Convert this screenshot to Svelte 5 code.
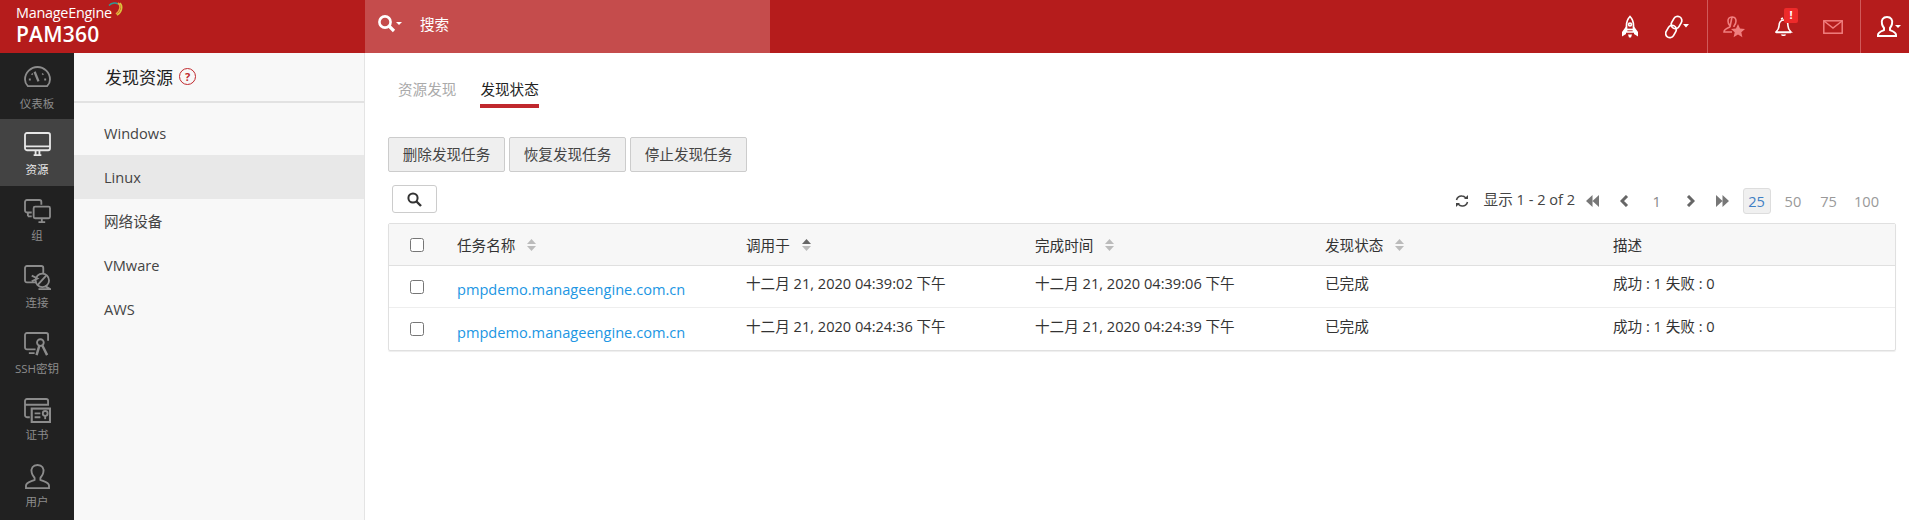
<script>
  const navItems = [
    { key: 'dash', label: '仪表板' },
    { key: 'res', label: '资源', active: true },
    { key: 'group', label: '组' },
    { key: 'conn', label: '连接' },
    { key: 'ssh', label: 'SSH密钥' },
    { key: 'cert', label: '证书' },
    { key: 'user', label: '用户' }
  ];
  const menu = ['Windows', 'Linux', '网络设备', 'VMware', 'AWS'];
  const rows = [
    { start: '十二月 21, 2020 04:39:02 下午', end: '十二月 21, 2020 04:39:06 下午' },
    { start: '十二月 21, 2020 04:24:36 下午', end: '十二月 21, 2020 04:24:39 下午' }
  ];
</script>

{#snippet sort(active)}
  <svg class="sort" width="9" height="12" viewBox="0 0 9 12">
    <path d="M4.5 0 9 5H0z" fill={active ? '#666' : '#bbb'} />
    <path d="M4.5 12 0 7h9z" fill="#bbb" />
  </svg>
{/snippet}

<div class="page">
  <header class="topbar">
    <div class="logo">
      <div class="me">ManageEngine
        <svg class="arc" width="16" height="15" viewBox="0 0 16 15" fill="none" stroke-width="1.6">
          <path d="M1 3.5C4 .5 8 .5 10 2" stroke="#2f9a94" />
          <path d="M10 1c3 2 3 7-2 11" stroke="#e8a33c" />
          <path d="M12 1c3 3 2 9-3 12" stroke="#d9c13c" />
        </svg>
      </div>
      <div class="pam">PAM360</div>
    </div>
    <div class="search">
      <svg width="26" height="20" viewBox="0 0 26 20" fill="none" stroke="#fff" stroke-width="2.6">
        <circle cx="8" cy="8" r="5.6" />
        <path d="M12 12l5 5" stroke-width="3.2" />
        <path d="M19 8h6l-3 3z" fill="#fff" stroke="none" />
      </svg>
      <span>搜索</span>
    </div>
    <div class="tools">
      <div class="tool-group first">
        <svg width="18" height="24" viewBox="0 0 18 24" fill="none" stroke="#fff" stroke-width="1.700">
          <path d="M9 1.500c2.500 2.500 3.500 5.500 3.500 9V17h-7v-6.500c0-3.500 1-6.500 3.500-9z" />
          <circle cx="9" cy="9.500" r="1.400" />
          <path d="M5 11.500 1 17v4.500l4-2.500zM13 11.500l4 5.500v4.500L13 19z" fill="#fff" stroke="none" />
          <path d="M7 19.500h4l-1 3H8z" fill="#fff" stroke="none" />
          <path d="M6 14.500h6" />
        </svg>
        <svg width="24" height="24" viewBox="0 0 24 24" fill="none" stroke="#fff" stroke-width="1.700">
          <rect x="-4.200" y="-6.500" width="8.400" height="13" rx="4.200" transform="translate(6 16.500) rotate(30)" />
          <rect x="-4.200" y="-6.500" width="8.400" height="13" rx="4.200" transform="translate(11.500 7.500) rotate(30)" />
          <path d="M18 9h6l-3 3.500z" fill="#fff" stroke="none" />
        </svg>
      </div>
      <div class="tool-group mid">
        <svg width="22" height="22" viewBox="0 0 22 22" fill="none" stroke="#f07f7f" stroke-width="1.600">
          <path d="M9 1c3 0 4 2 4 4s-1 4-2 5v1M7 11v-1C6 9 5 7 5 5s1-4 4-4zM7 11c-2 1-6 2-6 5h8" />
          <path d="M15 8l2 4.500 5 .5-3.700 3.200 1.100 5-4.400-2.700-4.400 2.700 1.100-5L8 13l5-.5z" fill="#f07f7f" stroke="none" />
        </svg>
        <span class="bell">
          <svg width="18" height="20" viewBox="0 0 18 20" fill="none" stroke="#fff" stroke-width="1.600">
            <path d="M9 4C6 4 4 6 4 10c0 3-1 4-3 6h15c-2-2-3-3-3-6 0-4-2-6-4-6zM1 16.500h15M6.500 18.500c.5 1 3.500 1 4 0M6 3l2-1" />
          </svg>
          <b>!</b>
        </span>
        <svg width="20" height="14" viewBox="0 0 20 14" fill="none" stroke="#f07f7f" stroke-width="1.500">
          <rect x=".8" y=".8" width="18.400" height="12.400" />
          <path d="M1 1l9 7 9-7" />
        </svg>
      </div>
      <div class="tool-group last">
        <svg width="24" height="22" viewBox="0 0 24 22" fill="none" stroke="#fff" stroke-width="2">
          <path d="M10 1c4 0 6 3 5 7-.4 2-1.500 3-2 4v2c2 1 6 2 6 5v1H1v-1c0-3 4-4 6-5v-2c-.5-1-1.600-2-2-4-1-4 1-7 5-7z" />
          <path d="M18 9h6l-3 3z" fill="#fff" stroke="none" />
        </svg>
      </div>
    </div>
  </header>

  <div class="body">
    <nav class="rail">
      {#each navItems as item}
        <div class="rail-item" class:active={item.active}>
          <svg width="27" height="25" viewBox="0 0 28 26" fill="none" stroke="currentColor" stroke-width="1.900">
            {#if item.key === 'dash'}
              <path d="M4 21C2 19 1 17 1 14 1 7 7 1 14 1s13 6 13 13c0 3-1 5-3 7z" />
              <path d="M11 6l4 10" stroke-width="2.400" />
              <path d="M5 14h2M21 14h2M8 8l1 1M20 8l-1 1" />
            {:else if item.key === 'res'}
              <rect x="1" y="1" width="26" height="18" rx="2" />
              <path d="M1 15h26M10 24h8M12 19v5M16 19v5" />
            {:else if item.key === 'group'}
              <path d="M8 14H3a2 2 0 0 1-2-2V3a2 2 0 0 1 2-2h13a2 2 0 0 1 2 2v3" />
              <path d="M4 18h4M4 14v4" />
              <rect x="10" y="8" width="17" height="12" rx="1.500" />
              <path d="M15 24h7M18.500 20v4" />
            {:else if item.key === 'conn'}
              <path d="M13 18H3a2 2 0 0 1-2-2V3a2 2 0 0 1 2-2h15a2 2 0 0 1 2 2v6" />
              <circle cx="19" cy="16" r="7" />
              <path d="M14 21l9-10M8 11l6 3-6 3" />
              <path d="M22 22l5 3H15" />
            {:else if item.key === 'ssh'}
              <path d="M12 18H3a2 2 0 0 1-2-2V3a2 2 0 0 1 2-2h20a2 2 0 0 1 2 2v6M5 22h6" />
              <circle cx="17" cy="11" r="3.500" />
              <path d="M16 14l-3 10M19 14l5 10" stroke-width="2.600" />
            {:else if item.key === 'cert'}
              <path d="M6 20H3a2 2 0 0 1-2-2V3a2 2 0 0 1 2-2h20a2 2 0 0 1 2 2v5M1 7h24" />
              <rect x="8" y="11" width="19" height="14" stroke-width="2.200" />
              <path d="M11 16h6M11 20h6" />
              <circle cx="22" cy="16" r="2.500" />
              <path d="M22 18v4" />
            {:else}
              <path d="M14 1c5 0 7 3.500 6 8-.4 2.500-2 4-3 5.500v2c3 1.500 9 2.500 9 6V25H2v-2.500c0-3.500 6-4.500 9-6v-2C10 13 8.400 11.500 8 9c-1-4.500 1-8 6-8z" />
            {/if}
          </svg>
          <span>{item.label}</span>
        </div>
      {/each}
    </nav>

    <aside class="panel">
      <div class="panel-title">发现资源 <i class="help">?</i></div>
      <ul>
        {#each menu as m}
          <li class:sel={m === 'Linux'}>{m}</li>
        {/each}
      </ul>
    </aside>

    <main class="content">
      <div class="tabs">
        <span>资源发现</span>
        <span class="on">发现状态</span>
      </div>
      <div class="actions">
        <button>删除发现任务</button>
        <button>恢复发现任务</button>
        <button>停止发现任务</button>
      </div>
      <div class="toolbar">
        <button class="find" aria-label="搜索">
          <svg width="15" height="15" viewBox="0 0 15 15" fill="none" stroke="#333" stroke-width="2">
            <circle cx="6" cy="6" r="4.600" />
            <path d="M9.500 9.500l4.500 4.500" stroke-width="2.400" />
          </svg>
        </button>
        <div class="pager">
          <svg class="refresh" width="14" height="14" viewBox="0 0 14 14" fill="none" stroke="#444" stroke-width="1.500">
            <path d="M1.500 6C2 3.500 4.500 1.500 7 2c2 0 3 1 4 2M12.500 8c-.5 2.500-3 4.500-5.500 4-2 0-3-1-4-2" />
            <path d="M13 1v4H9zM1 13V9h4z" fill="#444" stroke="none" />
          </svg>
          <span class="count">显示 1 - 2 of 2</span>
          <svg class="nav" width="13" height="12" viewBox="0 0 13 12"><path d="M6.500 0v12L0 6zM13 0v12L6.500 6z" fill="#777" /></svg>
          <svg class="nav prev" width="9" height="12" viewBox="0 0 9 12"><path d="M7 1 2 6l5 5" fill="none" stroke="#666" stroke-width="3" /></svg>
          <span class="num">1</span>
          <svg class="nav next" width="9" height="12" viewBox="0 0 9 12"><path d="M2 1l5 5-5 5" fill="none" stroke="#666" stroke-width="3" /></svg>
          <svg class="nav last" width="13" height="12" viewBox="0 0 13 12"><path d="M0 0v12l6.500-6zM6.500 0v12L13 6z" fill="#777" /></svg>
          <span class="size cur">25</span>
          <span class="size">50</span>
          <span class="size">75</span>
          <span class="size wide">100</span>
        </div>
      </div>
      <div class="grid">
        <div class="tr head">
          <div class="c0"><input type="checkbox" /></div>
          <div>任务名称 {@render sort(false)}</div>
          <div>调用于 {@render sort(true)}</div>
          <div>完成时间 {@render sort(false)}</div>
          <div>发现状态 {@render sort(false)}</div>
          <div>描述</div>
        </div>
        {#each rows as r}
          <div class="tr">
            <div class="c0"><input type="checkbox" /></div>
            <div class="link"><a href="#top" class="name">pmpdemo.manageengine.com.cn</a></div>
            <div class="txt">{r.start}</div>
            <div class="txt">{r.end}</div>
            <div class="txt">已完成</div>
            <div class="txt">成功 : 1 失败 : 0</div>
          </div>
        {/each}
      </div>
    </main>
  </div>
</div>

<style>
  :global(body) {
    margin: 0;
    background: #fff;
  }
  .page {
    height: 520px;
    overflow: hidden;
    display: flex;
    flex-direction: column;
    font-family: "Open Sans", "Noto Sans CJK SC", sans-serif;
    font-size: 14.6px;
    color: #333;
  }

  .topbar {
    height: 53px;
    flex: none;
    display: flex;
    background: #b51c1c;
    color: #fff;
  }
  .logo {
    width: 365px;
    box-sizing: border-box;
    padding: 4px 0 0 16px;
  }
  .me {
    font-size: 14.4px;
    line-height: 18px;
    position: relative;
    width: 100px;
    white-space: nowrap;
    letter-spacing: -.25px;
  }
  .arc {
    position: absolute;
    left: 92px;
    top: -2px;
  }
  .pam {
    font-size: 21px;
    line-height: 25px;
    font-weight: 600;
    letter-spacing: .2px;
  }
  .search {
    width: 405px;
    background: #c54c4c;
    display: flex;
    align-items: center;
    padding: 0 0 6px 12px;
    box-sizing: border-box;
    gap: 17px;
  }
  .tools {
    flex: 1;
    display: flex;
    justify-content: flex-end;
  }
  .tool-group {
    display: flex;
    align-items: center;
    height: 53px;
    box-sizing: border-box;
  }
  .tool-group.first {
    gap: 26px;
    padding-right: 18px;
  }
  .tool-group.mid {
    width: 154px;
    border-left: 1px solid #d05a5a;
    border-right: 1px solid #d05a5a;
    padding-left: 15px;
    gap: 30px;
  }
  .tool-group.last {
    width: 48px;
    padding-left: 16px;
  }
  .bell {
    position: relative;
    display: flex;
    margin-top: -2px;
  }
  .bell b {
    position: absolute;
    left: 9px;
    top: -8px;
    width: 14px;
    height: 15px;
    background: #ee2a2a;
    border-radius: 2px;
    font-size: 11px;
    line-height: 13px;
    text-align: center;
  }

  .body {
    flex: 1;
    display: flex;
    min-height: 0;
  }
  .rail {
    width: 74px;
    flex: none;
    background: #212121;
  }
  .rail-item {
    height: 66.4px;
    box-sizing: border-box;
    padding-top: 13px;
    display: flex;
    flex-direction: column;
    align-items: center;
    color: #8c8c8c;
    font-size: 11.5px;
    line-height: 15px;
    gap: 4.5px;
  }
  .rail-item.active {
    background: #434343;
    color: #e6e6e6;
  }

  .panel {
    width: 291px;
    flex: none;
    background: #f8f8f8;
    border-right: 1px solid #e4e4e4;
    box-sizing: border-box;
  }
  .panel-title {
    height: 50px;
    box-sizing: border-box;
    border-bottom: 2px solid #e2e2e2;
    padding: 0 0 1px 31px;
    font-size: 17px;
    color: #222;
    display: flex;
    align-items: center;
    gap: 6px;
  }
  .help {
    width: 15px;
    height: 15px;
    border: 1.5px solid #c0282d;
    border-radius: 50%;
    color: #c0282d;
    font-size: 11px;
    font-weight: 700;
    font-style: normal;
    line-height: 15px;
    text-align: center;
  }
  .panel ul {
    list-style: none;
    margin: 8px 0 0;
    padding: 0;
  }
  .panel li {
    height: 44px;
    line-height: 44px;
    padding-left: 30px;
    color: #444;
  }
  .panel li.sel {
    background: #e8e8e8;
  }

  .content {
    flex: 1;
    min-width: 0;
    padding: 0 13px 0 23px;
  }
  .tabs {
    display: flex;
    gap: 24px;
    padding: 25px 0 0 10px;
    height: 59px;
    box-sizing: border-box;
    line-height: 22px;
    color: #aaa;
  }
  .tabs .on {
    color: #222;
    height: 30px;
    border-bottom: 4px solid #c0282d;
    box-sizing: border-box;
  }
  .actions {
    display: flex;
    gap: 4px;
    margin-top: 25px;
  }
  .actions button {
    width: 117px;
    height: 35px;
    background: #efefef;
    border: 1px solid #ccc;
    border-radius: 2px;
    font: inherit;
    color: #444;
    padding: 0 0 2px;
  }
  .toolbar {
    display: flex;
    justify-content: space-between;
    align-items: flex-start;
    margin-top: 13px;
    height: 38px;
  }
  .find {
    margin-left: 4px;
    width: 45px;
    height: 28px;
    background: #fff;
    border: 1px solid #ccc;
    border-radius: 3px;
    padding: 0;
    display: flex;
    align-items: center;
    justify-content: center;
  }
  .pager {
    display: flex;
    align-items: center;
    height: 26px;
    margin: 3px 17px 0 0;
    color: #444;
  }
  .refresh {
    margin-right: 15px;
  }
  .count {
    width: 102px;
    white-space: nowrap;
    position: relative;
    top: -3px;
  }
  .nav.prev {
    margin-left: 21px;
  }
  .num {
    color: #888;
    margin-left: 24px;
    width: 8px;
  }
  .nav.next {
    margin-left: 25px;
  }
  .nav.last {
    margin-left: 21px;
    margin-right: 14px;
  }
  .size {
    color: #999;
    margin-left: 19px;
  }
  .size.wide {
    margin-left: 17px;
  }
  .size.cur {
    color: #3f7fc4;
    background: #f0f0f0;
    border: 1px solid #ddd;
    border-radius: 3px;
    box-sizing: border-box;
    height: 26px;
    line-height: 25px;
    margin: 0 -5px 0 0;
    width: 28px;
    text-align: center;
  }

  .grid {
    border: 1px solid #e0e0e0;
    border-radius: 2px;
    box-shadow: 0 1px 1px #eee;
  }
  .tr {
    display: grid;
    grid-template-columns: 68px 289px 289px 290px 288px 1fr;
    height: 42px;
    align-items: center;
    border-bottom: 1px solid #eee;
    box-sizing: border-box;
  }
  .tr:last-child {
    border-bottom: 0;
  }
  .tr.head {
    background: #f7f7f7;
    border-bottom: 1px solid #e0e0e0;
  }
  .tr > div {
    display: flex;
    align-items: center;
    gap: 12px;
    white-space: nowrap;
  }
  .c0 {
    justify-content: center;
    margin-left: -12px;
  }
  .tr input {
    width: 14px;
    height: 14px;
    margin: 0;
  }
  .tr .txt {
    margin-bottom: 8px;
  }
  .tr .link {
    margin-top: 5px;
  }
  .name {
    color: #2196e3;
    text-decoration: none;
  }
  .sort {
    flex: none;
  }
</style>
